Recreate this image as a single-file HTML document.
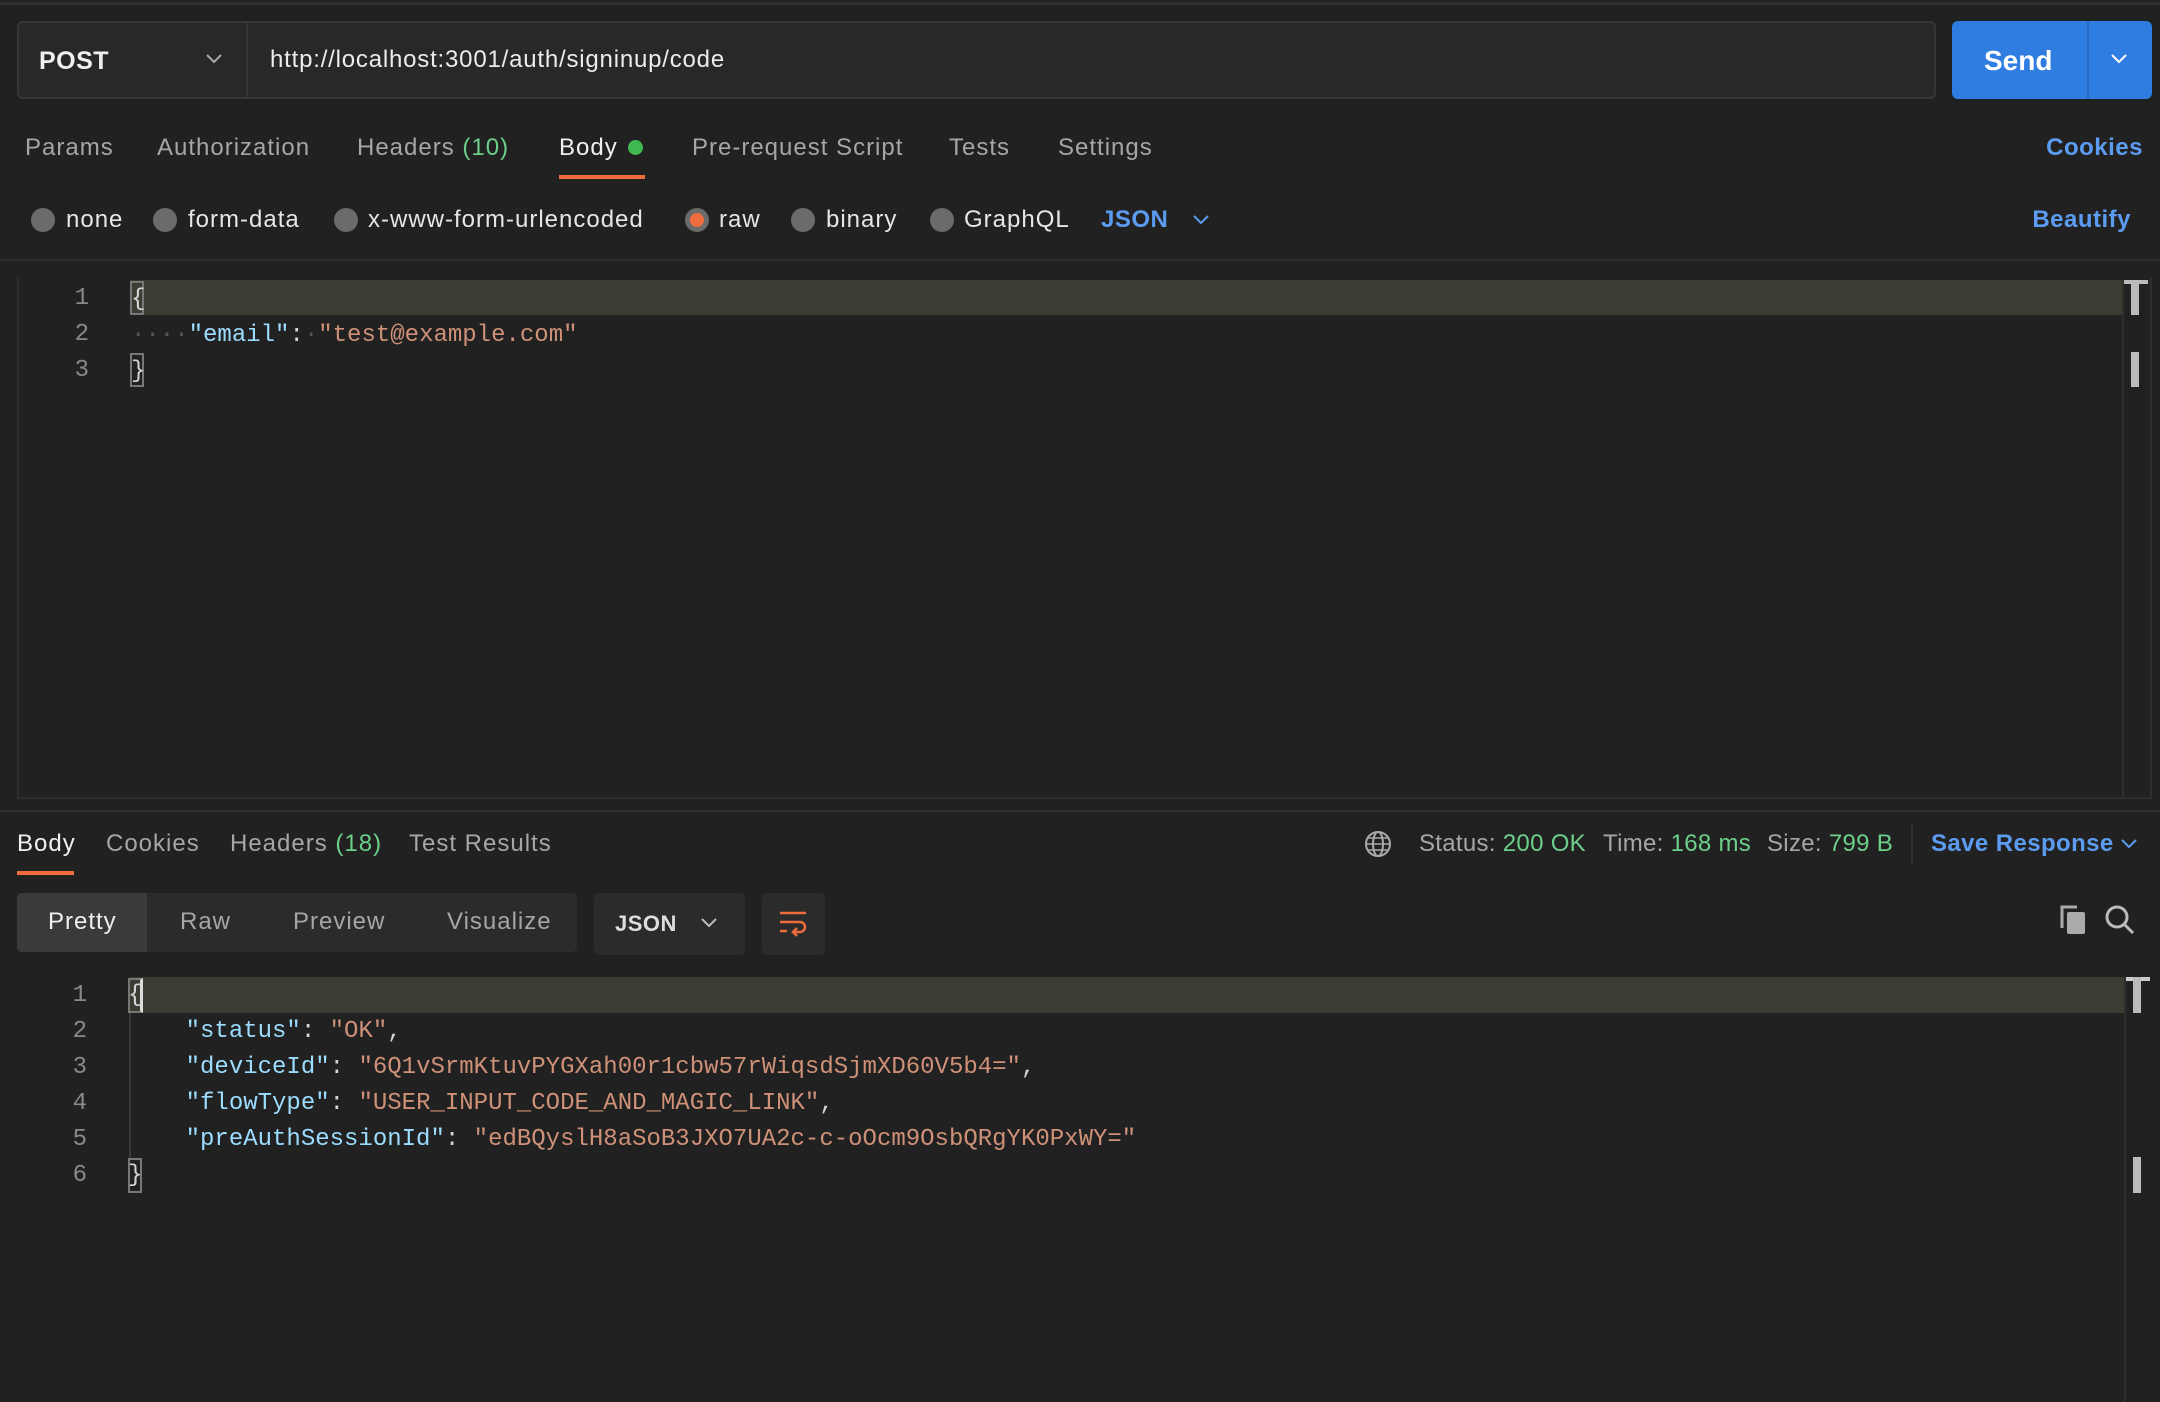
<!DOCTYPE html>
<html><head><meta charset="utf-8"><style>
*{margin:0;padding:0;box-sizing:border-box}
body{width:2160px;height:1402px;background:#212121;position:relative;overflow:hidden;font-family:"Liberation Sans",sans-serif;color:#a6a6a6}
.a{position:absolute;white-space:nowrap}
.t{font-size:24px;line-height:30px;letter-spacing:1px}
.m{font-family:"Liberation Mono",monospace;font-size:24px;line-height:36px}
.k{color:#9cdcfe}.s{color:#ce9178}.w{color:#d4d4d4}
.g{color:#6ccf8a}
.rad{position:absolute;width:24px;height:24px;border-radius:50%;background:#6b6b6b;top:208px}
.ln{color:#8a8a8a;text-align:right;width:30px}
</style></head><body>
<div class="a" style="left:0;top:2px;width:2160px;height:3px;background:#2e2e2e"></div>
<div class="a" style="left:17px;top:21px;width:1919px;height:78px;background:#282828;border:2px solid #363636;border-radius:6px"></div>
<div class="a" style="left:246px;top:22px;width:2px;height:76px;background:#363636"></div>
<div class="a" style="left:39px;top:46px;font-size:25px;font-weight:bold;color:#f0f0f0;line-height:30px;letter-spacing:0.5px">POST</div>
<svg class="a" style="left:205px;top:52px" width="18" height="14"><path d="M2 3 L9 10 L16 3" stroke="#aaa" stroke-width="2" fill="none"/></svg>
<div class="a" style="left:270px;top:45px;font-size:24px;color:#ececec;line-height:30px;letter-spacing:0.8px">http://localhost:3001/auth/signinup/code</div>
<div class="a" style="left:1952px;top:21px;width:200px;height:78px;background:#2f7de1;border-radius:6px"></div>
<div class="a" style="left:2087px;top:21px;width:2px;height:78px;background:#2668c0"></div>
<div class="a" style="left:1984px;top:45px;font-size:28px;font-weight:bold;color:#fff;line-height:32px">Send</div>
<svg class="a" style="left:2110px;top:53px" width="18" height="12"><path d="M2 2 L9 9 L16 2" stroke="#fff" stroke-width="2" fill="none"/></svg>
<div class="a t" style="left:25px;top:133px">Params</div>
<div class="a t" style="left:157px;top:133px">Authorization</div>
<div class="a t" style="left:357px;top:133px">Headers <span class="g">(10)</span></div>
<div class="a t" style="left:559px;top:133px;color:#f0f0f0">Body</div>
<div class="a" style="left:628px;top:140px;width:15px;height:15px;border-radius:50%;background:#3fb950"></div>
<div class="a" style="left:559px;top:175px;width:86px;height:4px;background:#ef6c3c"></div>
<div class="a t" style="left:692px;top:133px">Pre-request Script</div>
<div class="a t" style="left:949px;top:133px">Tests</div>
<div class="a t" style="left:1058px;top:133px">Settings</div>
<div class="a t" style="right:17px;top:133px;color:#5c9cf0;font-weight:bold;letter-spacing:0.5px">Cookies</div>
<div class="rad" style="left:31px"></div><div class="a t" style="left:66px;top:205px;color:#e6e6e6">none</div>
<div class="rad" style="left:153px"></div><div class="a t" style="left:188px;top:205px;color:#e6e6e6">form-data</div>
<div class="rad" style="left:334px"></div><div class="a t" style="left:368px;top:205px;color:#e6e6e6">x-www-form-urlencoded</div>
<div class="rad" style="left:685px;background:#ef6c3c;border:5px solid #6b6b6b"></div><div class="a t" style="left:719px;top:205px;color:#e6e6e6">raw</div>
<div class="rad" style="left:791px"></div><div class="a t" style="left:826px;top:205px;color:#e6e6e6">binary</div>
<div class="rad" style="left:930px"></div><div class="a t" style="left:964px;top:205px;color:#e6e6e6">GraphQL</div>
<div class="a t" style="left:1101px;top:205px;color:#5c9cf0;font-weight:bold;letter-spacing:0.5px">JSON</div>
<svg class="a" style="left:1192px;top:214px" width="18" height="12"><path d="M2 2 L9 9 L16 2" stroke="#5c9cf0" stroke-width="2" fill="none"/></svg>
<div class="a t" style="right:29px;top:205px;color:#5c9cf0;font-weight:bold;letter-spacing:0.5px">Beautify</div>
<div class="a" style="left:0;top:259px;width:2160px;height:2px;background:#2e2e2e"></div>
<div class="a" style="left:17px;top:278px;width:2135px;height:521px;border-left:2px solid #2e2e2e;border-bottom:2px solid #2e2e2e;border-right:2px solid #2e2e2e"></div>
<div class="a" style="left:130px;top:280px;width:1992px;height:35px;background:#3c3c32"></div>
<div class="a" style="left:2122px;top:280px;width:2px;height:519px;background:#2e2e2e"></div>
<div class="a" style="left:2124px;top:280px;width:24px;height:4px;background:#bbb"></div>
<div class="a" style="left:2131px;top:280px;width:8px;height:35px;background:#bbb"></div>
<div class="a" style="left:2131px;top:352px;width:8px;height:35px;background:#bbb"></div>
<div class="a m ln" style="left:59px;top:281px">1<br>2<br>3</div>
<div class="a" style="left:130px;top:281px;width:14px;height:34px;border:2px solid #777"></div>
<div class="a" style="left:130px;top:353px;width:14px;height:34px;border:2px solid #777"></div>
<div class="a m w" style="left:131px;top:282px">{<br><span style="color:#555">····</span><span class="k">"email"</span>:<span style="color:#555">·</span><span class="s">"test@example.com"</span><br>}</div>
<div class="a" style="left:0;top:810px;width:2160px;height:2px;background:#2e2e2e"></div>
<div class="a t" style="left:17px;top:829px;color:#f0f0f0">Body</div>
<div class="a" style="left:17px;top:871px;width:57px;height:4px;background:#ef6c3c"></div>
<div class="a t" style="left:106px;top:829px">Cookies</div>
<div class="a t" style="left:230px;top:829px">Headers <span class="g">(18)</span></div>
<div class="a t" style="left:409px;top:829px">Test Results</div>
<svg class="a" style="left:1364px;top:829px" width="28" height="30"><circle cx="14" cy="15" r="12" stroke="#aaa" stroke-width="2" fill="none"/><ellipse cx="14" cy="15" rx="5" ry="12" stroke="#aaa" stroke-width="2" fill="none"/><path d="M2 15 H26 M4 9 H24 M4 21 H24" stroke="#aaa" stroke-width="1.5"/></svg>
<div class="a t" style="left:1419px;top:829px;letter-spacing:0.3px">Status: <span class="g">200 OK</span></div>
<div class="a t" style="left:1603px;top:829px;letter-spacing:0.3px">Time: <span class="g">168 ms</span></div>
<div class="a t" style="left:1767px;top:829px;letter-spacing:0.3px">Size: <span class="g">799 B</span></div>
<div class="a" style="left:1911px;top:824px;width:2px;height:40px;background:#333"></div>
<div class="a t" style="left:1931px;top:829px;color:#5c9cf0;font-weight:bold;letter-spacing:0.4px">Save Response</div>
<svg class="a" style="left:2120px;top:838px" width="18" height="12"><path d="M2 2 L9 9 L16 2" stroke="#5c9cf0" stroke-width="2" fill="none"/></svg>
<div class="a" style="left:17px;top:893px;width:560px;height:59px;background:#2b2b2b;border-radius:5px"></div>
<div class="a" style="left:17px;top:893px;width:130px;height:59px;background:#3a3a3a;border-radius:5px 0 0 5px"></div>
<div class="a t" style="left:48px;top:907px;color:#f0f0f0">Pretty</div>
<div class="a t" style="left:180px;top:907px">Raw</div>
<div class="a t" style="left:293px;top:907px">Preview</div>
<div class="a t" style="left:447px;top:907px">Visualize</div>
<div class="a" style="left:594px;top:893px;width:151px;height:62px;background:#2b2b2b;border-radius:5px"></div>
<div class="a t" style="left:615px;top:909px;color:#ddd;font-weight:bold;font-size:22px;letter-spacing:0.5px">JSON</div>
<svg class="a" style="left:700px;top:917px" width="18" height="12"><path d="M2 2 L9 9 L16 2" stroke="#bbb" stroke-width="2" fill="none"/></svg>
<div class="a" style="left:762px;top:893px;width:63px;height:62px;background:#2b2b2b;border-radius:5px"></div>
<svg class="a" style="left:778px;top:910px" width="32" height="30"><path d="M2 3 H28 M2 12 H22 a5 5 0 0 1 0 10 H16 M19 18 L15 22 L19 26 M2 21 H9" stroke="#ef6c3c" stroke-width="2.5" fill="none"/></svg>
<svg class="a" style="left:2057px;top:904px" width="32" height="32"><rect x="10" y="8" width="18" height="22" rx="2" fill="#aaa"/><path d="M5 24 V3 H20" stroke="#aaa" stroke-width="3" fill="none"/></svg>
<svg class="a" style="left:2104px;top:904px" width="32" height="32"><circle cx="13" cy="13" r="10" stroke="#bbb" stroke-width="3" fill="none"/><path d="M20 20 L29 29" stroke="#bbb" stroke-width="3"/></svg>
<div class="a" style="left:130px;top:977px;width:1996px;height:36px;background:#3c3c32"></div>
<div class="a" style="left:2124px;top:977px;width:2px;height:425px;background:#2e2e2e"></div>
<div class="a" style="left:2126px;top:977px;width:24px;height:4px;background:#ccc"></div>
<div class="a" style="left:2133px;top:977px;width:8px;height:36px;background:#bbb"></div>
<div class="a" style="left:2133px;top:1157px;width:8px;height:36px;background:#bbb"></div>
<div class="a" style="left:129px;top:1013px;width:2px;height:145px;background:#3a3a3a"></div>
<div class="a m ln" style="left:57px;top:978px">1<br>2<br>3<br>4<br>5<br>6</div>
<div class="a" style="left:128px;top:978px;width:15px;height:35px;border:2px solid #777;border-right:3px solid #ddd"></div>
<div class="a" style="left:128px;top:1158px;width:14px;height:35px;border:2px solid #777"></div>
<div class="a m w" style="left:128px;top:978px">{<br>&nbsp;&nbsp;&nbsp;&nbsp;<span class="k">"status"</span>: <span class="s">"OK"</span>,<br>&nbsp;&nbsp;&nbsp;&nbsp;<span class="k">"deviceId"</span>: <span class="s">"6Q1vSrmKtuvPYGXah00r1cbw57rWiqsdSjmXD60V5b4="</span>,<br>&nbsp;&nbsp;&nbsp;&nbsp;<span class="k">"flowType"</span>: <span class="s">"USER_INPUT_CODE_AND_MAGIC_LINK"</span>,<br>&nbsp;&nbsp;&nbsp;&nbsp;<span class="k">"preAuthSessionId"</span>: <span class="s">"edBQyslH8aSoB3JXO7UA2c-c-oOcm9OsbQRgYK0PxWY="</span><br>}</div>
</body></html>
